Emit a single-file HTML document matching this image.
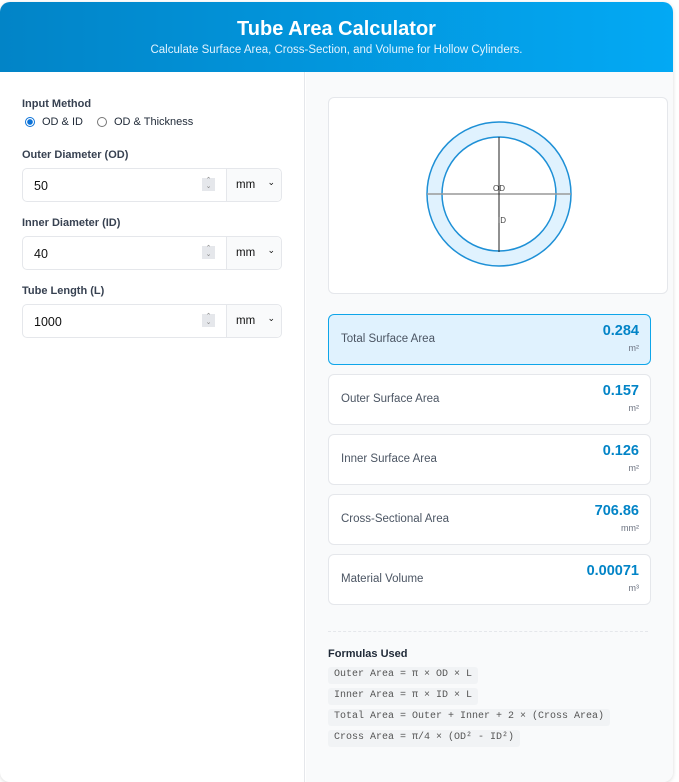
<!DOCTYPE html>
<html><head><style>
*{box-sizing:border-box;margin:0;padding:0}
body{width:679px;height:772px;background:#fff;font-family:"Liberation Sans",sans-serif;position:relative;overflow:hidden}
.app{position:absolute;left:0;top:2px;width:673px;height:780px;border-radius:10px;overflow:hidden;box-shadow:0 1px 4px rgba(0,0,0,.15);background:#fff}
.hd{height:70px;background:linear-gradient(90deg,#0284c7,#03a9f4);color:#fff;text-align:center}
.hd h1{font-size:20px;font-weight:bold;padding-top:16px;line-height:23px}
.hd p{font-size:11.5px;margin-top:3px;color:#e0f2fe}
.left{position:absolute;left:0;top:70px;width:305px;bottom:0;border-right:1px solid #e5e7eb}
.right{position:absolute;left:306px;top:70px;right:0;bottom:0;background:#f9fafb}
.lbl{position:absolute;left:22px;font-size:11px;font-weight:bold;color:#374151}
.radio{position:absolute;top:44px;font-size:11px;color:#1f2937;display:flex;align-items:center}
.rc{width:10px;height:10px;border-radius:50%;border:1px solid #767676;margin-right:7px;background:#fff}
.rc.on{border:1px solid #0b72d8;background:radial-gradient(circle,#0b72d8 0 2.6px,#fff 3px)}
.inp{position:absolute;left:22px;width:260px;height:34px;border:1px solid #e5e7eb;border-radius:5px;background:#fff;font-size:12.5px;color:#111}
.inp .v{position:absolute;left:11px;top:10px}
.inp .sp{position:absolute;left:179px;top:9px;width:13px;height:13px;background:#e5e7eb;color:#888;font-size:7px;line-height:6px;text-align:center}
.inp .sel{position:absolute;left:203px;top:0;right:0;height:32px;background:#f9fafb;border-left:1px solid #e5e7eb;border-radius:0 5px 5px 0;font-size:11.5px}
.inp .sel span{position:absolute;left:9px;top:10px}
.inp .sel i{position:absolute;right:6px;top:8px;font-style:normal;font-size:9px}
.diag{position:absolute;left:22px;top:25px;width:340px;height:197px;background:#fff;border:1px solid #e5e7eb;border-radius:6px}
.card{position:absolute;left:22px;width:323px;height:51px;background:#fff;border:1px solid #e5e7eb;border-radius:6px}
.card.hi{background:#e0f2fe;border-color:#0ea5e9}
.card .n{position:absolute;left:12px;top:18px;font-size:11.5px;color:#4b5563}
.card .val{position:absolute;right:11px;top:8px;font-size:14.5px;font-weight:bold;color:#0284c7}
.card .u{position:absolute;right:11px;top:28px;font-size:9px;color:#6b7280}
.dash{position:absolute;left:22px;top:559px;width:320px;border-top:1px dashed #e5e7eb}
.ft{position:absolute;left:22px;top:576px;font-size:11px;font-weight:bold;color:#1f2937}
.code{position:absolute;left:22px;height:17px;background:#f1f3f5;border-radius:3px;font-family:"Liberation Mono",monospace;font-size:10px;color:#555;padding:2px 6px;white-space:pre}
</style></head><body>
<div class="app">
<div class="hd"><h1>Tube Area Calculator</h1><p>Calculate Surface Area, Cross-Section, and Volume for Hollow Cylinders.</p></div>
<div class="left">
<div class="lbl" style="top:26px">Input Method</div>
<div class="radio" style="left:25px"><span class="rc on"></span>OD &amp; ID</div>
<div class="radio" style="left:97px"><span class="rc"></span>OD &amp; Thickness</div>
<div class="lbl" style="top:77px">Outer Diameter (OD)</div>
<div class="inp" style="top:96px"><span class="v">50</span><span class="sp">⌃<br>⌄</span><div class="sel"><span>mm</span><i>⌄</i></div></div>
<div class="lbl" style="top:145px">Inner Diameter (ID)</div>
<div class="inp" style="top:164px"><span class="v">40</span><span class="sp">⌃<br>⌄</span><div class="sel"><span>mm</span><i>⌄</i></div></div>
<div class="lbl" style="top:213px">Tube Length (L)</div>
<div class="inp" style="top:232px"><span class="v">1000</span><span class="sp">⌃<br>⌄</span><div class="sel"><span>mm</span><i>⌄</i></div></div>
</div>
<div class="right">
<div class="diag"><svg width="340" height="197" style="position:absolute;left:-1px;top:-1px">
<circle cx="171" cy="97" r="64.5" fill="none" stroke="#e0f2fe" stroke-width="15"/>
<circle cx="171" cy="97" r="72" fill="none" stroke="#1e90d6" stroke-width="1.5"/>
<circle cx="171" cy="97" r="57" fill="#fff" stroke="#1e90d6" stroke-width="1.5"/>
<line x1="99" y1="97" x2="243" y2="97" stroke="#999" stroke-width="1.5"/>
<line x1="171" y1="40" x2="171" y2="155" stroke="#222" stroke-width="1"/>
<text x="165" y="94" font-size="8" fill="#444" font-family="Liberation Sans">OD</text>
<text x="170" y="126" font-size="8" fill="#444" font-family="Liberation Sans">ID</text>
</svg></div>
<div class="card hi" style="top:242px"><span class="n">Total Surface Area</span><span class="val">0.284</span><span class="u">m²</span></div>
<div class="card" style="top:302px"><span class="n">Outer Surface Area</span><span class="val">0.157</span><span class="u">m²</span></div>
<div class="card" style="top:362px"><span class="n">Inner Surface Area</span><span class="val">0.126</span><span class="u">m²</span></div>
<div class="card" style="top:422px"><span class="n">Cross-Sectional Area</span><span class="val">706.86</span><span class="u">mm²</span></div>
<div class="card" style="top:482px"><span class="n">Material Volume</span><span class="val">0.00071</span><span class="u">m³</span></div>
<div class="dash"></div>
<div class="ft">Formulas Used</div>
<div class="code" style="top:595px">Outer Area = π × OD × L</div>
<div class="code" style="top:616px">Inner Area = π × ID × L</div>
<div class="code" style="top:637px">Total Area = Outer + Inner + 2 × (Cross Area)</div>
<div class="code" style="top:658px">Cross Area = π/4 × (OD² - ID²)</div>
</div>
</div>
</body></html>
